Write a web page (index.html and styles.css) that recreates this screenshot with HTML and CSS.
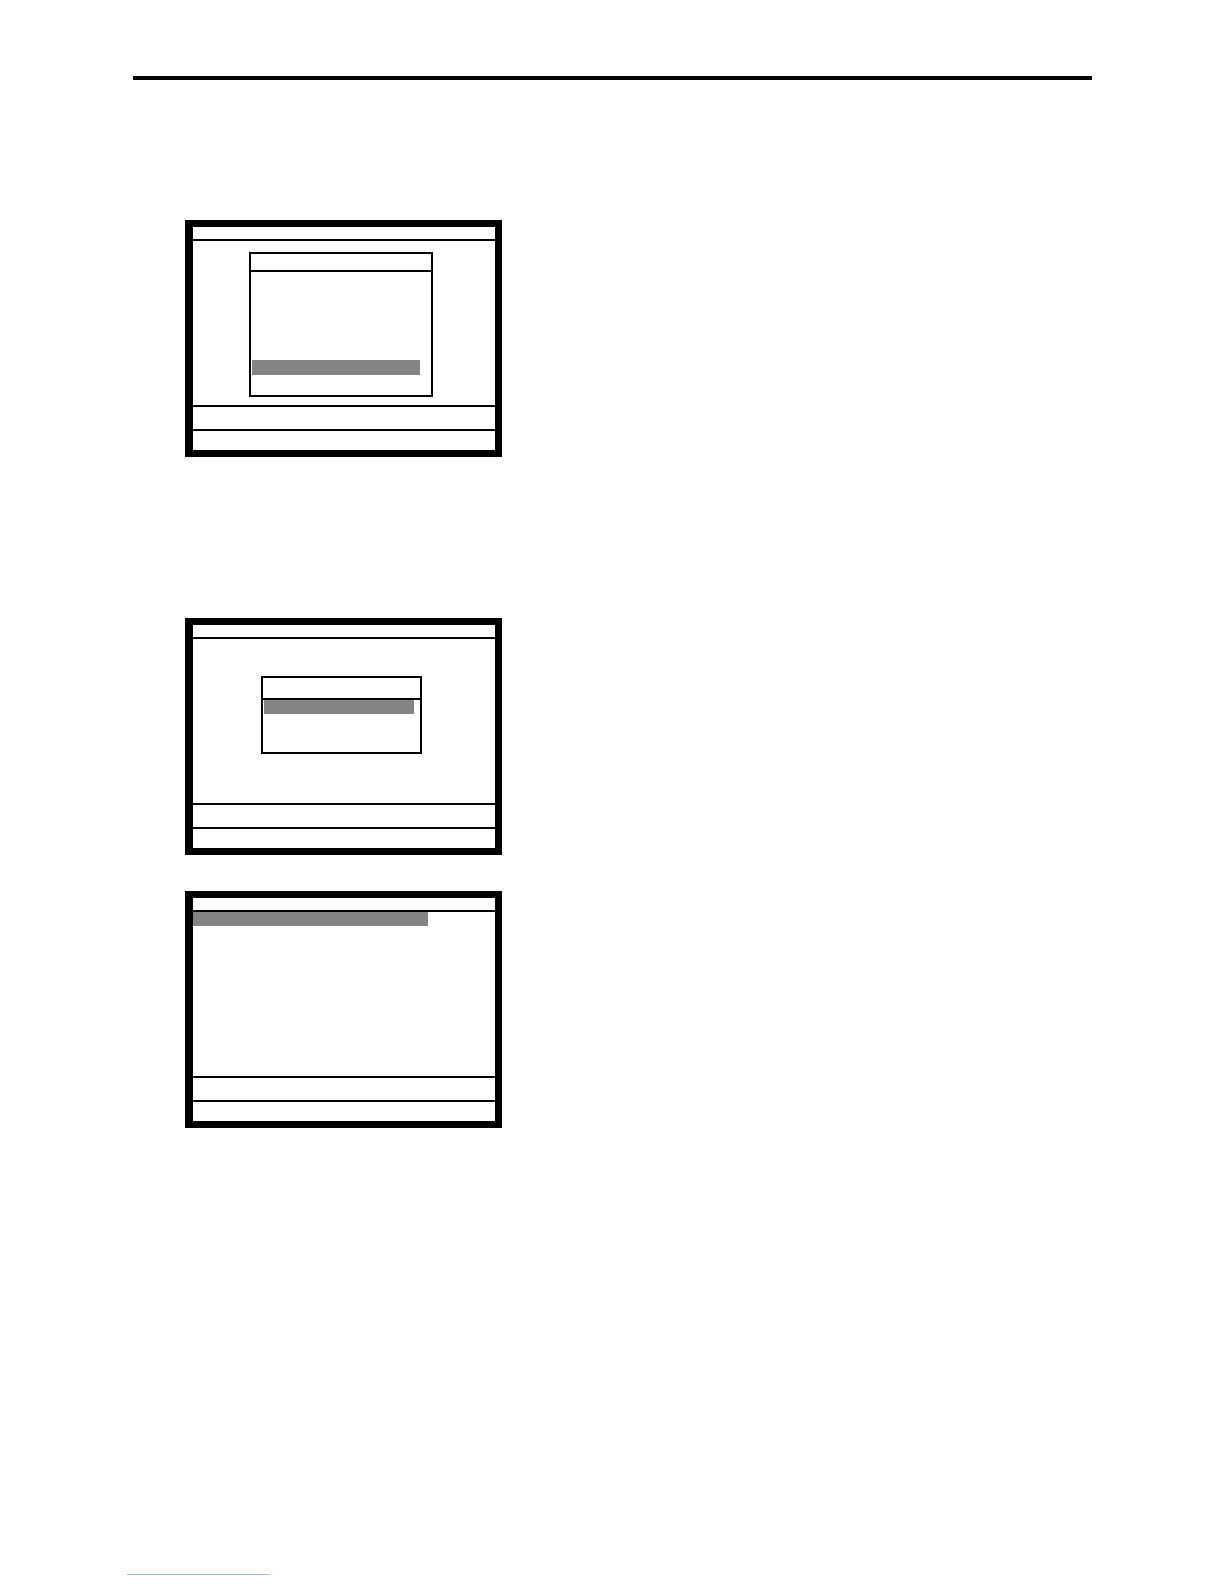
FILE: index.html
```html
<!DOCTYPE html>
<html lang="en">
<head>
<meta charset="utf-8">
<title>Screens</title>
<link rel="stylesheet" href="styles.css">
</head>
<body>
<div class="page">
  <div class="rule"></div>

  <div class="screen s1">
    <div class="title"></div>
    <div class="body body-1">
      <div class="popup popup-1">
        <div class="popup-head"></div>
        <div class="popup-list">
          <div class="sel sel-1"></div>
        </div>
      </div>
    </div>
    <div class="status"></div>
    <div class="footer"></div>
  </div>

  <div class="screen s2">
    <div class="title"></div>
    <div class="body body-2">
      <div class="popup popup-2">
        <div class="popup-head"></div>
        <div class="popup-list">
          <div class="sel sel-2"></div>
        </div>
      </div>
    </div>
    <div class="status"></div>
    <div class="footer"></div>
  </div>

  <div class="screen s3">
    <div class="title"></div>
    <div class="body body-3">
      <div class="sel sel-3"></div>
    </div>
    <div class="status"></div>
    <div class="footer"></div>
  </div>

  <div class="foot-rule"></div>
</div>
</body>
</html>
```

FILE: styles.css
```css
* { box-sizing: border-box; }
html, body { margin: 0; padding: 0; background: #fff; }
body { font-family: "Liberation Sans", Arial, sans-serif; }

.page {
  width: 1224px;
  height: 1584px;
  padding-top: 76px;
  position: relative;
}

.rule {
  margin-left: 133px;
  width: 959px;
  height: 4px;
  background: #000;
}

.screen {
  margin-left: 185px;
  width: 317px;
  border-style: solid;
  border-color: #000;
  border-width: 7px 7px 7px 8px;
  display: flex;
  flex-direction: column;
  background: #fff;
}
.s1 { margin-top: 140px; }
.s2 { margin-top: 161px; }
.s3 { margin-top: 36px; }

.title { height: 14px; border-bottom: 2px solid #000; }
.body { height: 166px; border-bottom: 2px solid #000; }
.status { height: 24px; border-bottom: 2px solid #000; }
.footer { height: 19px; }

.popup {
  border: 2px solid #000;
  background: #fff;
}
.popup-head { border-bottom: 2px solid #000; }
.popup-list { padding-left: 1px; }
.sel { background: #848484; }

.body-1 { padding: 11px 0 0 56px; }
.popup-1 { width: 184px; height: 145px; }
.popup-1 .popup-head { height: 18px; }
.popup-1 .popup-list { padding-top: 88px; }
.sel-1 { width: 168px; height: 15px; }

.body-2 { padding: 37px 0 0 68px; }
.popup-2 { width: 161px; height: 78px; }
.popup-2 .popup-head { height: 22px; }
.popup-2 .popup-list { padding-top: 0; }
.sel-2 { width: 150px; height: 14px; }

.body-3 { padding: 0; }
.sel-3 { width: 235px; height: 14px; }

.foot-rule {
  margin-left: 127px;
  margin-top: 446px;
  width: 143px;
  height: 1px;
  background: #a9b6dc;
}
```
